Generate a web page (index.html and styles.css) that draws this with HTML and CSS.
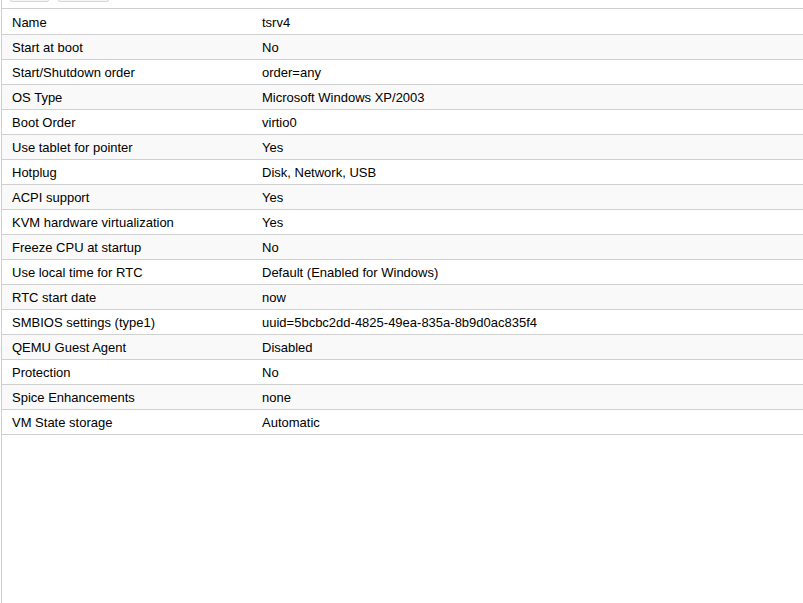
FILE: index.html
```html
<!DOCTYPE html>
<html>
<head>
<meta charset="utf-8">
<link rel="stylesheet" href="styles.css">
</head>
<body>
<div class="panel">
  <div class="toolbar">
    <div class="btn btn-a"></div>
    <div class="btn btn-b"></div>
  </div>
  <div class="grid">
    <div class="row"><div class="key">Name</div><div class="val">tsrv4</div></div>
    <div class="row"><div class="key">Start at boot</div><div class="val">No</div></div>
    <div class="row"><div class="key">Start/Shutdown order</div><div class="val">order=any</div></div>
    <div class="row"><div class="key">OS Type</div><div class="val">Microsoft Windows XP/2003</div></div>
    <div class="row"><div class="key">Boot Order</div><div class="val">virtio0</div></div>
    <div class="row"><div class="key">Use tablet for pointer</div><div class="val">Yes</div></div>
    <div class="row"><div class="key">Hotplug</div><div class="val">Disk, Network, USB</div></div>
    <div class="row"><div class="key">ACPI support</div><div class="val">Yes</div></div>
    <div class="row"><div class="key">KVM hardware virtualization</div><div class="val">Yes</div></div>
    <div class="row"><div class="key">Freeze CPU at startup</div><div class="val">No</div></div>
    <div class="row"><div class="key">Use local time for RTC</div><div class="val">Default (Enabled for Windows)</div></div>
    <div class="row"><div class="key">RTC start date</div><div class="val">now</div></div>
    <div class="row"><div class="key">SMBIOS settings (type1)</div><div class="val">uuid=5bcbc2dd-4825-49ea-835a-8b9d0ac835f4</div></div>
    <div class="row"><div class="key">QEMU Guest Agent</div><div class="val">Disabled</div></div>
    <div class="row"><div class="key">Protection</div><div class="val">No</div></div>
    <div class="row"><div class="key">Spice Enhancements</div><div class="val">none</div></div>
    <div class="row"><div class="key">VM State storage</div><div class="val">Automatic</div></div>
  </div>
</div>
</body>
</html>
```
FILE: styles.css
```css
html, body {
  margin: 0;
  padding: 0;
  background: #fff;
}
body {
  font-family: "Liberation Sans", Arial, sans-serif;
  font-size: 13px;
  color: #000;
}
.panel {
  height: 603px;
  margin-left: 1px;
  border-left: 1px solid #cfcfcf;
  display: flex;
  flex-direction: column;
}
.toolbar {
  display: flex;
  align-items: flex-end;
  gap: 9px;
  padding-left: 8px;
  overflow: hidden;
  border-bottom: 1px solid #cfcfcf;
  box-sizing: border-box;
  height: 9px;
}
.btn {
  height: 22px;
  margin-bottom: 6px;
  border: 1px solid #d6d6d6;
  background: #f5f5f5;
  border-radius: 2px;
  box-sizing: border-box;
  flex: none;
}
.btn-a { width: 39px; }
.btn-b { width: 51px; }
.grid {
  display: flex;
  flex-direction: column;
  padding-top: 1px;
}
.row {
  display: grid;
  grid-template-columns: 250px 1fr;
  height: 25px;
  border-bottom: 1px solid #d0d0d0;
  box-sizing: border-box;
  align-items: center;
}
.row:nth-child(even) {
  background: #f9f9f9;
}
.key, .val {
  padding: 0 10px;
  white-space: nowrap;
  line-height: 15px;
}
```
